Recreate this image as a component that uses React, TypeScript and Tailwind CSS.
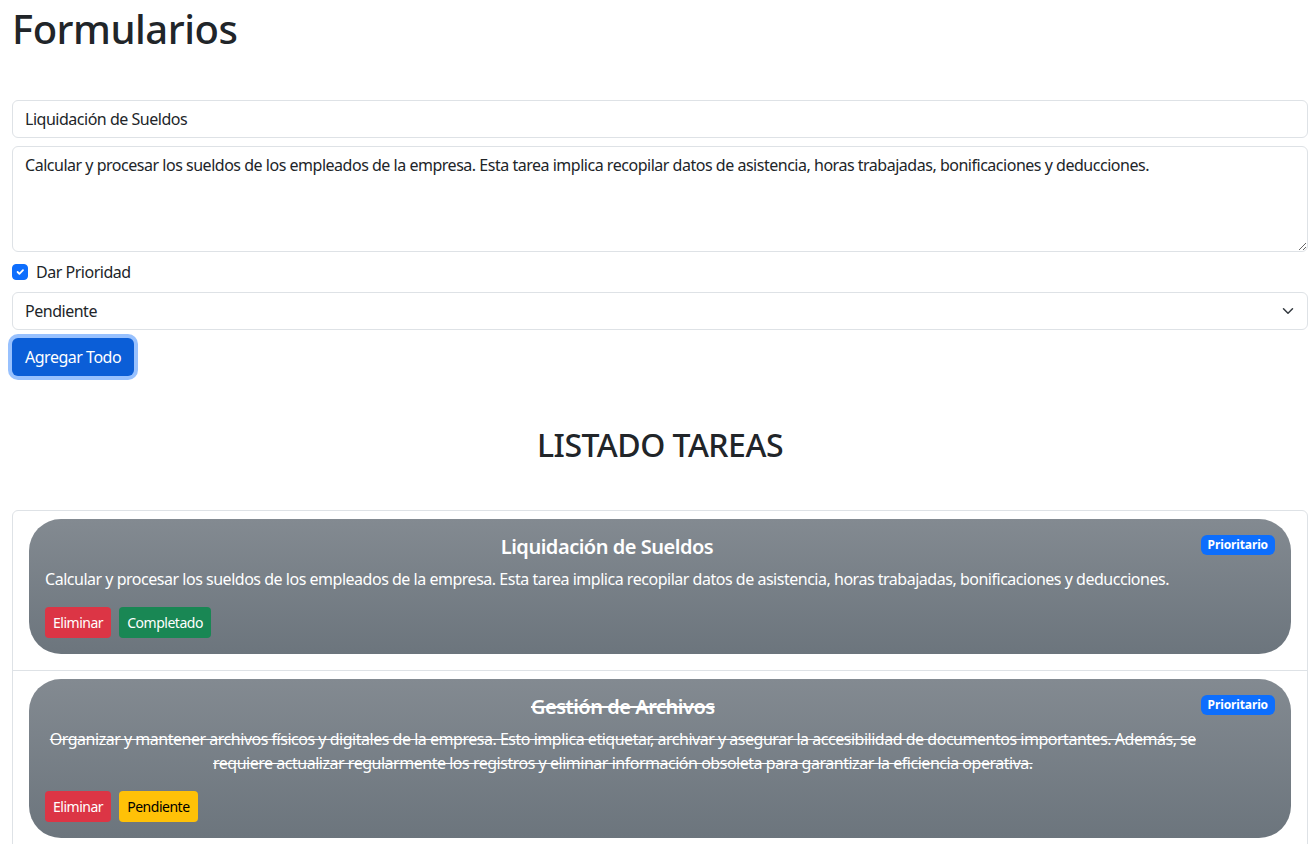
import { useState } from "react";

type Tarea = {
  id: number;
  titulo: string;
  descripcion: string;
  prioridad: boolean;
  estado: "completado" | "pendiente";
};

const tareasIniciales: Tarea[] = [
  {
    id: 1,
    titulo: "Liquidación de Sueldos",
    descripcion:
      "Calcular y procesar los sueldos de los empleados de la empresa. Esta tarea implica recopilar datos de asistencia, horas trabajadas, bonificaciones y deducciones.",
    prioridad: true,
    estado: "pendiente",
  },
  {
    id: 2,
    titulo: "Gestión de Archivos",
    descripcion:
      "Organizar y mantener archivos físicos y digitales de la empresa. Esto implica etiquetar, archivar y asegurar la accesibilidad de documentos importantes. Además, se requiere actualizar regularmente los registros y eliminar información obsoleta para garantizar la eficiencia operativa.",
    prioridad: true,
    estado: "completado",
  },
];

function Chevron() {
  return (
    <svg width="16" height="12" viewBox="0 0 16 16" className="shrink-0">
      <path
        d="m2 5 6 6 6-6"
        fill="none"
        stroke="#343a40"
        strokeWidth="2"
        strokeLinecap="round"
        strokeLinejoin="round"
      />
    </svg>
  );
}

export default function App() {
  const [titulo, setTitulo] = useState("Liquidación de Sueldos");
  const [descripcion, setDescripcion] = useState(tareasIniciales[0].descripcion);
  const [prioridad, setPrioridad] = useState(true);
  const [estado, setEstado] = useState("pendiente");
  const [tareas, setTareas] = useState<Tarea[]>(tareasIniciales);

  const eliminar = (id: number) => setTareas(tareas.filter((t) => t.id !== id));
  const toggle = (id: number) =>
    setTareas(
      tareas.map((t) =>
        t.id === id ? { ...t, estado: t.estado === "completado" ? "pendiente" : "completado" } : t
      )
    );

  return (
    <div className="min-h-screen bg-white pl-3 pr-[7px] text-[16px] leading-[24px] tracking-[-0.03em] text-[#212529] font-['Noto_Sans','Liberation_Sans',sans-serif]">
      <h1 className="pt-[5px] text-[40px] leading-[48px] font-medium">Formularios</h1>

      <form className="mt-[47px] flex flex-col gap-2" onSubmit={(e) => e.preventDefault()}>
        <input
          className="h-[38px] w-full rounded-[6px] border border-[#dee2e6] px-3 outline-none"
          value={titulo}
          onChange={(e) => setTitulo(e.target.value)}
        />
        <textarea
          className="h-[106px] w-full rounded-[6px] border border-[#dee2e6] px-3 py-[6px] outline-none"
          value={descripcion}
          onChange={(e) => setDescripcion(e.target.value)}
        />
        <label className="flex h-[24px] items-center gap-2">
          <span
            className={`flex h-4 w-4 items-center justify-center rounded-[4px] border ${
              prioridad ? "border-[#0d6efd] bg-[#0d6efd]" : "border-[#dee2e6] bg-white"
            }`}
          >
            <input
              type="checkbox"
              className="hidden"
              checked={prioridad}
              onChange={(e) => setPrioridad(e.target.checked)}
            />
            {prioridad && (
              <svg width="12" height="12" viewBox="0 0 20 20">
                <path
                  d="m6 10 3 3 6-6"
                  fill="none"
                  stroke="#fff"
                  strokeWidth="3"
                  strokeLinecap="round"
                  strokeLinejoin="round"
                />
              </svg>
            )}
          </span>
          Dar Prioridad
        </label>
        <div className="relative">
          <select
            className="h-[38px] w-full appearance-none rounded-[6px] border border-[#dee2e6] bg-white px-3 outline-none"
            value={estado}
            onChange={(e) => setEstado(e.target.value)}
          >
            <option value="pendiente">Pendiente</option>
            <option value="completado">Completado</option>
          </select>
          <span className="pointer-events-none absolute right-3 top-[13px]">
            <Chevron />
          </span>
        </div>
        <div>
          <button
            type="submit"
            className="h-[38px] rounded-[6px] bg-[#0b5ed7] px-[13px] text-white shadow-[0_0_0_4px_rgba(49,132,253,0.5)]"
          >
            Agregar Todo
          </button>
        </div>
      </form>

      <h2 className="mt-[50px] text-center text-[32px] leading-[38px] font-medium">LISTADO TAREAS</h2>

      <ul className="mt-[46px] rounded-[6px] border border-[#dee2e6]">
        {tareas.map((t) => {
          const tachado = t.estado === "completado" ? "line-through" : "";
          return (
            <li key={t.id} className="border-b border-[#dee2e6] px-4 py-2 last:border-b-0">
              <div className="mb-2 flex justify-between rounded-[32px] bg-gradient-to-b from-[#838a91] to-[#6c757d] p-4 text-white">
                <div className="text-center">
                  <h5 className={`mb-2 text-[20px] leading-[24px] font-semibold ${tachado}`}>{t.titulo}</h5>
                  <p className={`mb-4 ${tachado}`}>{t.descripcion}</p>
                  <div className="flex gap-2">
                    <button
                      onClick={() => eliminar(t.id)}
                      className="h-[31px] rounded-[4px] bg-[#dc3545] px-2 text-[14px] text-white"
                    >
                      Eliminar
                    </button>
                    {t.estado === "completado" ? (
                      <button
                        onClick={() => toggle(t.id)}
                        className="h-[31px] rounded-[4px] bg-[#ffc107] px-2 text-[14px] text-black"
                      >
                        Pendiente
                      </button>
                    ) : (
                      <button
                        onClick={() => toggle(t.id)}
                        className="h-[31px] rounded-[4px] bg-[#198754] px-2 text-[14px] text-white"
                      >
                        Completado
                      </button>
                    )}
                  </div>
                </div>
                {t.prioridad && (
                  <span className="flex h-[20px] shrink-0 items-center self-start rounded-[6px] bg-[#0d6efd] px-[7px] text-[12px] leading-[12px] tracking-[-0.01em] font-bold">
                    Prioritario
                  </span>
                )}
              </div>
            </li>
          );
        })}
      </ul>
    </div>
  );
}
